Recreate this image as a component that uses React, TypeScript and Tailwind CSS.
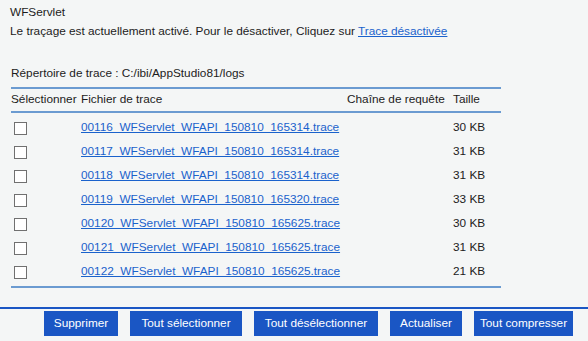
import React from "react";

const files = [
  ["00116_WFServlet_WFAPI_150810_165314.trace", "30 KB"],
  ["00117_WFServlet_WFAPI_150810_165314.trace", "31 KB"],
  ["00118_WFServlet_WFAPI_150810_165314.trace", "31 KB"],
  ["00119_WFServlet_WFAPI_150810_165320.trace", "33 KB"],
  ["00120_WFServlet_WFAPI_150810_165625.trace", "30 KB"],
  ["00121_WFServlet_WFAPI_150810_165625.trace", "31 KB"],
  ["00122_WFServlet_WFAPI_150810_165625.trace", "21 KB"],
];

const buttons: [string, string][] = [
  ["Supprimer", "w-[74px]"],
  ["Tout sélectionner", "w-[112px]"],
  ["Tout désélectionner", "w-[124px]"],
  ["Actualiser", "w-[72px]"],
  ["Tout compresser", "w-[99px]"],
];

export default function App() {
  return (
    <div className="w-[588px] h-[341px] bg-[#f4f6f6] text-[#1c1c1c] text-[11.8px] font-['Liberation_Sans',Arial,sans-serif] overflow-hidden">
      <div className="px-[10px] pt-[3px]">
        <div className="leading-[19px]">WFServlet</div>
        <div className="leading-[19px]">
          Le traçage est actuellement activé. Pour le désactiver, Cliquez sur{" "}
          <a href="#" className="text-[#1a62cc] underline">Trace désactivée</a>
        </div>
        <div className="leading-[19px] mt-[23px] pl-[1px]">Répertoire de trace : C:/ibi/AppStudio81/logs</div>
      </div>
      <div className="ml-[11px] mt-[4px] w-[490px] border-t-2 border-b-2 border-[#6b9bd1]">
        <div className="flex h-[24px] items-center border-b-2 border-[#6b9bd1]">
          <div className="w-[70px]">Sélectionner</div>
          <div className="w-[266px]">Fichier de trace</div>
          <div className="w-[106px]">Chaîne de requête</div>
          <div className="w-[48px]">Taille</div>
        </div>
        <div className="pt-[3px] pb-[2px]">
          {files.map(([name, size]) => (
            <div key={name} className="flex h-[24px] items-center">
              <div className="w-[70px] pl-[3px] flex items-center">
                <span className="block w-[13px] h-[13px] bg-white border border-[#707070]" />
              </div>
              <div className="w-[266px]">
                <a href="#" className="text-[#1a62cc] underline">{name}</a>
              </div>
              <div className="w-[106px]" />
              <div className="w-[48px]">{size}</div>
            </div>
          ))}
        </div>
      </div>
      <div className="mt-[19px] border-t-2 border-[#1a56c4] pt-[2px] flex justify-end gap-[12px] pr-[15px]">
        {buttons.map(([label, w]) => (
          <button
            key={label}
            className={`${w} h-[25px] bg-[#1a56c4] text-white flex items-center justify-center`}
          >
            {label}
          </button>
        ))}
      </div>
    </div>
  );
}
